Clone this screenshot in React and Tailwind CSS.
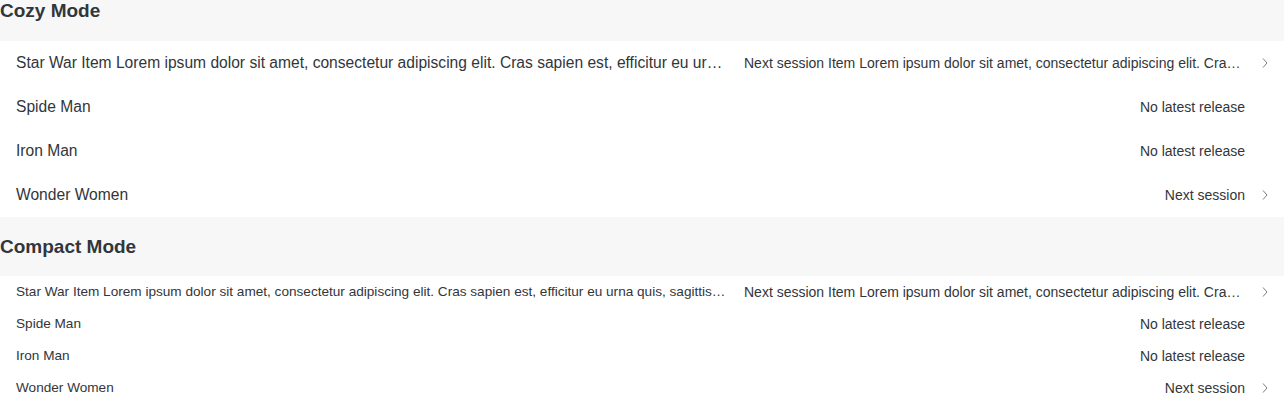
import React from 'react';

const rows = [
  {
    title: 'Star War Item Lorem ipsum dolor sit amet, consectetur adipiscing elit. Cras sapien est, efficitur eu urna quis, sagittis bibendum lectus. Nulla facilisi.',
    info: 'Next session Item Lorem ipsum dolor sit amet, consectetur adipiscing elit. Cras sapien est, efficitur eu urna quis.',
    nav: true,
    long: true,
  },
  { title: 'Spide Man', info: 'No latest release' },
  { title: 'Iron Man', info: 'No latest release' },
  { title: 'Wonder Women', info: 'Next session', nav: true },
];

function Chevron() {
  return (
    <svg width="6" height="10" viewBox="0 0 6 10" className="text-[#7a7d80]">
      <polyline points="1,0.5 5,5 1,9.5" fill="none" stroke="currentColor" strokeWidth="1" />
    </svg>
  );
}

function Row({ r, compact }) {
  return (
    <div className={`flex items-center pl-4 bg-white ${compact ? 'h-8' : 'h-11'}`}>
      <div className={`flex-1 min-w-0 truncate ${compact ? 'text-[13.6px]' : 'text-[15.6px]'}`}>{r.title}</div>
      <div className={`${r.long ? 'w-[501px] ml-4' : 'ml-4'} shrink-0 truncate text-right text-[14px]`}>{r.info}</div>
      <div className="w-[39px] shrink-0 flex justify-center pl-[1px]">{r.nav && <Chevron />}</div>
    </div>
  );
}

function Section({ title, compact, first }) {
  return (
    <div>
      <div className={`bg-[#f7f7f7] flex items-end ${first ? 'h-[41px] pb-[21px]' : 'h-[59px] pb-[20px]'}`}>
        <h2 className="text-[19px] font-bold leading-none text-[#32363a]">{title}</h2>
      </div>
      {rows.map((r, i) => (
        <Row key={i} r={r} compact={compact} />
      ))}
    </div>
  );
}

export default function App() {
  return (
    <div className="w-[1284px] h-[404px] overflow-hidden bg-white text-[#32363a]" style={{ fontFamily: '"Liberation Sans", Arial, sans-serif' }}>
      <Section title="Cozy Mode" first />
      <Section title="Compact Mode" compact />
    </div>
  );
}
